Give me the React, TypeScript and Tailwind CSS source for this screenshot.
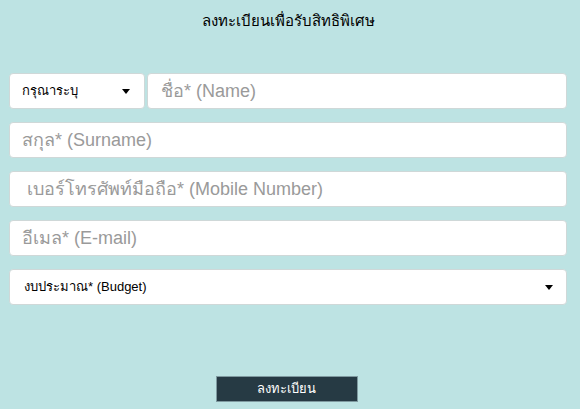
export default function App() {
  return (
    <div className="w-[580px] h-[409px] bg-[#bde3e3] font-['Liberation_Sans',sans-serif] flex flex-col">
      <h1 className="text-center text-[15px] text-black pt-[10px] h-[73px] pr-[4px]">ลงทะเบียนเพื่อรับสิทธิพิเศษ</h1>

      <div className="pl-[9px] pr-[13px] flex flex-col gap-[13px]">
        <div className="flex gap-[2px]">
          <div className="w-[136px] h-[36px] bg-white border border-[#cfd8d8] rounded-[4px] flex items-center justify-between pl-[12px] pr-[14px]">
            <span className="text-[13px] text-black">กรุณาระบุ</span>
            <span className="w-0 h-0 border-l-[4px] border-r-[4px] border-t-[5px] border-l-transparent border-r-transparent border-t-black" />
          </div>
          <div className="flex-1 h-[36px] bg-white border border-[#cfd8d8] rounded-[4px] flex items-center px-[13px]">
            <span className="text-[18px] text-[#9a9a9a]">ชื่อ* (Name)</span>
          </div>
        </div>

        {["สกุล* (Surname)", " เบอร์โทรศัพท์มือถือ* (Mobile Number)", "อีเมล* (E-mail)"].map((p) => (
          <div key={p} className="h-[36px] bg-white border border-[#cfd8d8] rounded-[4px] flex items-center px-[12px]">
            <span className="text-[18px] text-[#9a9a9a] whitespace-pre">{p}</span>
          </div>
        ))}

        <div className="h-[36px] bg-white border border-[#cfd8d8] rounded-[4px] flex items-center justify-between pl-[14px] pr-[13px]">
          <span className="text-[13px] text-black">งบประมาณ* (Budget)</span>
          <span className="w-0 h-0 border-l-[4px] border-r-[4px] border-t-[5px] border-l-transparent border-r-transparent border-t-black" />
        </div>
      </div>

      <div className="flex justify-center mt-[71px] pr-[7px]">
        <button className="w-[142px] h-[26px] bg-[#263a44] text-white text-[13px] border border-[#7f9aa0]">ลงทะเบียน</button>
      </div>
    </div>
  );
}
